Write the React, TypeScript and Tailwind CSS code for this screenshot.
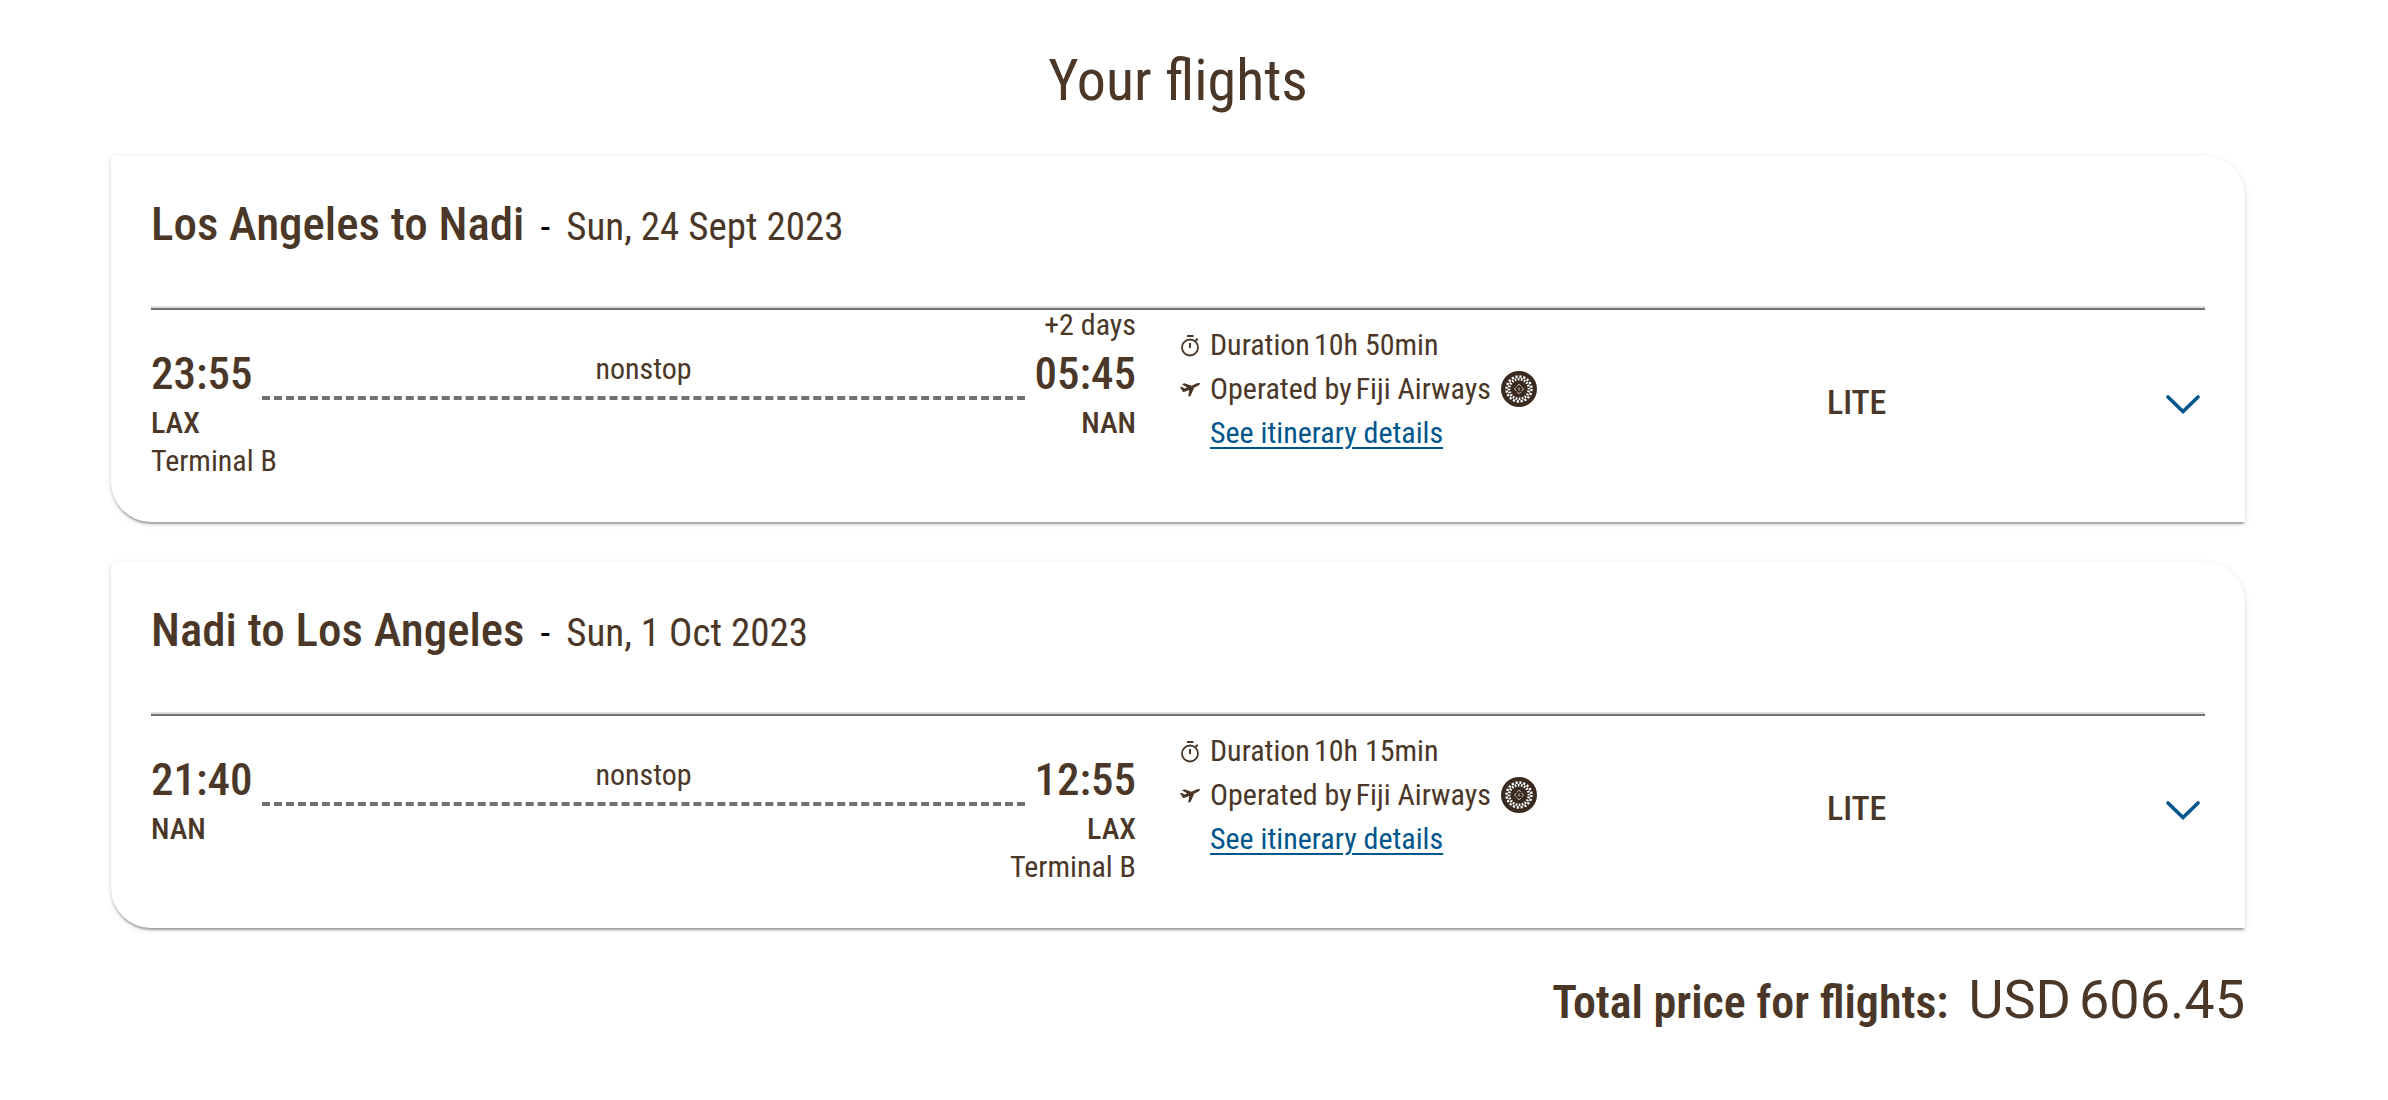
import React from 'react';

type Stop = { time: string; code: string; terminal?: string };

type Flight = {
  route: string;
  date: string;
  from: Stop;
  to: Stop;
  dayShift?: string;
  duration: string;
  fare: string;
};

const flights: Flight[] = [
  {
    route: 'Los Angeles to Nadi',
    date: 'Sun, 24 Sept 2023',
    from: { time: '23:55', code: 'LAX', terminal: 'Terminal B' },
    to: { time: '05:45', code: 'NAN' },
    dayShift: '+2 days',
    duration: '10h 50min',
    fare: 'LITE',
  },
  {
    route: 'Nadi to Los Angeles',
    date: 'Sun, 1 Oct 2023',
    from: { time: '21:40', code: 'NAN' },
    to: { time: '12:55', code: 'LAX', terminal: 'Terminal B' },
    duration: '10h 15min',
    fare: 'LITE',
  },
];

function StopwatchIcon() {
  return (
    <svg viewBox="0 0 20 24" className="h-6 w-5 shrink-0" fill="none" stroke="currentColor" strokeWidth="1.8" aria-hidden="true">
      <circle cx="10" cy="14.500" r="8" />
      <path d="M7 3h6.500M10 10v5M15.500 8l2.200-2.200" strokeWidth="2" />
    </svg>
  );
}

function PlaneIcon() {
  return (
    <svg viewBox="0 0 20 16" className="h-4 w-5 shrink-0" fill="currentColor" aria-hidden="true">
      <path d="M0 6.200l1.500-.5 3 1.900 2.700-1L2 3.300l2.200-1 7.300 2.500 4.300-2C17.300 2 19.200 1.700 19.900 2.300c.5.700-.8 1.900-2.200 2.600L14.300 6.600 10.500 15l-2.200.8.9-6.800-4.500 1.800c-.8.3-1.500.2-2-.4z" />
    </svg>
  );
}

function AirlineLogo() {
  return (
    <svg viewBox="0 0 36 36" className="h-9 w-9 shrink-0" fill="none" role="img" aria-label="Fiji Airways emblem">
      <circle cx="18" cy="18" r="18" fill="#3a2a20" />
      <g stroke="#fff">
        <circle cx="18" cy="18" r="12.500" strokeWidth="2.400" strokeDasharray="2.200 1.727" />
        <circle cx="18" cy="18" r="9.900" strokeWidth="2.600" strokeDasharray="1.700 1.410" strokeDashoffset="1.500" />
        <path d="M18 13.200l2 2M18 13.200l-2 2M13.500 18l2-2M13.500 18l2 2M22.500 18l-2-2M22.500 18l-2 2M18 22.800l2-2M18 22.800l-2-2M18 16.500v3" strokeWidth="1" strokeOpacity=".75" />
      </g>
    </svg>
  );
}

function Chevron() {
  return (
    <svg viewBox="0 0 36 22" className="h-[22px] w-9" fill="none" stroke="#00558c" strokeWidth="3.600" strokeLinecap="round" aria-hidden="true">
      <path d="M3 3l15 14.500L33 3" />
    </svg>
  );
}

function FlightCard({ flight }: { flight: Flight }) {
  const { from, to } = flight;
  return (
    <section className="rounded-tr-[40px] rounded-bl-[40px] bg-white px-10 pt-10 pb-[42px] shadow-[0_4px_2px_-2px_rgba(0,0,0,0.2),0_2px_2px_0_rgba(0,0,0,0.14),0_2px_6px_0_rgba(0,0,0,0.12)]">
      <header className="flex h-14 items-baseline leading-[56px]">
        <h2 className="text-[47px] font-medium">{flight.route}</h2>
        <span className="mx-4 text-[39px] text-black">-</span>
        <p className="text-[39px]">{flight.date}</p>
      </header>
      <div className="mt-[54px] border-t-2 border-b-2 border-t-[#dddde3] border-b-[#717073]" />
      <div className="grid grid-cols-12">
        <div className="col-span-6 pr-[42px]">
          <p className="h-[30px] text-right leading-[30px]">{flight.dayShift}</p>
          <div className="mt-2 flex items-end gap-[10px]">
            <span className="text-[45px] leading-[52px] font-medium">{from.time}</span>
            <span className="flex-1 border-b-4 border-dashed border-[#717073] pb-3 text-center leading-[30px]">nonstop</span>
            <span className="text-[45px] leading-[52px] font-medium">{to.time}</span>
          </div>
          <div className="mt-1 flex min-h-[76px] justify-between leading-[38px]">
            <div>
              <p className="font-medium">{from.code}</p>
              <p>{from.terminal}</p>
            </div>
            <div className="text-right">
              <p className="font-medium">{to.code}</p>
              <p>{to.terminal}</p>
            </div>
          </div>
        </div>
        <div className="col-span-3 pt-[13px] pl-0.5 leading-[44px] whitespace-nowrap">
          <p className="flex items-center gap-2.5">
            <StopwatchIcon />
            <span className="flex gap-1">
              <span>Duration</span>
              <span>{flight.duration}</span>
            </span>
          </p>
          <p className="flex items-center gap-2.5">
            <PlaneIcon />
            <span className="flex gap-1">
              <span>Operated by</span>
              <span>Fiji Airways</span>
            </span>
            <AirlineLogo />
          </p>
          <a href="#itinerary" className="ml-[30px] text-[#00558c] underline decoration-2 underline-offset-4">
            See itinerary details
          </a>
        </div>
        <p className="col-span-2 self-center pt-[14px] pr-3 text-center text-[34px] leading-10 font-medium">{flight.fare}</p>
        <div className="flex items-center justify-end pt-5 pr-1">
          <button type="button" aria-label={`Show fare details for ${flight.route}`}>
            <Chevron />
          </button>
        </div>
      </div>
    </section>
  );
}

export default function App() {
  return (
    <main className="bg-white pt-12 pr-[143px] pb-16 pl-[111px] font-['Roboto_Condensed','Roboto',sans-serif] text-[30px] text-[#4a3728]">
      <h1 className="mb-11 text-center text-[58px] leading-[64px]">Your flights</h1>
      <div className="flex flex-col gap-10">
        {flights.map((flight) => (
          <FlightCard key={flight.route} flight={flight} />
        ))}
      </div>
      <div className="mt-10 flex items-baseline justify-end gap-5 leading-[64px]">
        <span className="text-[46px] font-semibold">Total price for flights:</span>
        <span className="flex gap-2 font-['Roboto',sans-serif] text-[54px]">
          <span>USD</span>
          <span>606.45</span>
        </span>
      </div>
    </main>
  );
}
